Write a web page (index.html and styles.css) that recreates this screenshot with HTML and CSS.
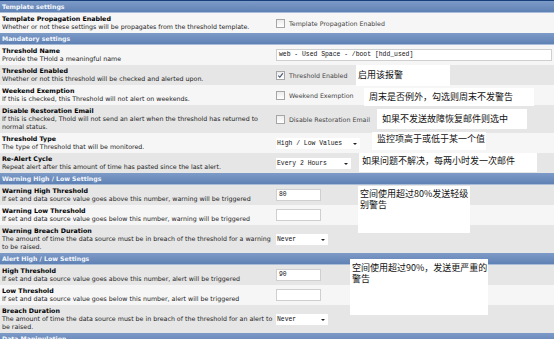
FILE: index.html
```html
<!DOCTYPE html>
<html lang="en">
<head>
    <meta charset="UTF-8">
    <title>Threshold Template</title>
    <link rel="stylesheet" href="styles.css">
</head>
<body>
    <div class="page">
        <div class="hdr">Template settings</div>
        <div class="row light">
            <div class="desc"><b>Template Propagation Enabled</b>Whether or not these settings will be propagates from the threshold template.</div>
            <div class="field"><span class="cb"></span><span class="lbl">Template Propagation Enabled</span></div>
        </div>

        <div class="hdr">Mandatory settings</div>
        <div class="row light">
            <div class="desc"><b>Threshold Name</b>Provide the THold a meaningful name</div>
            <div class="field"><span class="text wide">web - Used Space - /boot [hdd_used]</span></div>
        </div>
        <div class="row gray">
            <div class="desc"><b>Threshold Enabled</b>Whether or not this threshold will be checked and alerted upon.</div>
            <div class="field"><span class="cb checked"><svg viewBox="0 0 8 8" width="7" height="7"><path d="M1.5 4.2 L3.2 6 L6.6 1.6" fill="none" stroke="#3a4a6a" stroke-width="1.2"/></svg></span><span class="lbl">Threshold Enabled</span></div>
        </div>
        <div class="row light">
            <div class="desc"><b>Weekend Exemption</b>If this is checked, this Threshold will not alert on weekends.</div>
            <div class="field"><span class="cb"></span><span class="lbl">Weekend Exemption</span></div>
        </div>
        <div class="row gray">
            <div class="desc"><b>Disable Restoration Email</b>If this is checked, Thold will not send an alert when the threshold has returned to normal status.</div>
            <div class="field"><span class="cb"></span><span class="lbl">Disable Restoration Email</span></div>
        </div>
        <div class="row light">
            <div class="desc"><b>Threshold Type</b>The type of Threshold that will be monitored.</div>
            <div class="field"><span class="select s-type">High / Low Values<i class="arrow"></i></span></div>
        </div>
        <div class="row gray">
            <div class="desc"><b>Re-Alert Cycle</b>Repeat alert after this amount of time has pasted since the last alert.</div>
            <div class="field"><span class="select s-cycle">Every 2 Hours<i class="arrow"></i></span></div>
        </div>

        <div class="hdr">Warning High / Low Settings</div>
        <div class="row gray">
            <div class="desc"><b>Warning High Threshold</b>If set and data source value goes above this number, warning will be triggered</div>
            <div class="field"><span class="text short">80</span></div>
        </div>
        <div class="row light">
            <div class="desc"><b>Warning Low Threshold</b>If set and data source value goes below this number, warning will be triggered</div>
            <div class="field"><span class="text short"></span></div>
        </div>
        <div class="row gray">
            <div class="desc"><b>Warning Breach Duration</b>The amount of time the data source must be in breach of the threshold for a warning to be raised.</div>
            <div class="field"><span class="select s-never">Never<i class="arrow"></i></span></div>
        </div>

        <div class="hdr">Alert High / Low Settings</div>
        <div class="row gray">
            <div class="desc"><b>High Threshold</b>If set and data source value goes above this number, alert will be triggered</div>
            <div class="field"><span class="text short">90</span></div>
        </div>
        <div class="row light">
            <div class="desc"><b>Low Threshold</b>If set and data source value goes below this number, alert will be triggered</div>
            <div class="field"><span class="text short"></span></div>
        </div>
        <div class="row gray">
            <div class="desc"><b>Breach Duration</b>The amount of time the data source must be in breach of the threshold for an alert to be raised.</div>
            <div class="field"><span class="select s-never">Never<i class="arrow"></i></span></div>
        </div>

        <div class="hdr">Data Manipulation</div>

        <!-- pasted annotations -->
        <div class="note n1">启用该报警</div>
        <div class="note n2">周末是否例外，勾选则周末不发警告</div>
        <div class="note n3">如果不发送故障恢复邮件则选中</div>
        <div class="note n4">监控项高于或低于某一个值</div>
        <div class="note n5">如果问题不解决，每两小时发一次邮件</div>
        <div class="note n6">空间使用超过80%发送轻级<br>别警告</div>
        <div class="note n7">空间使用超过90%，发送更严重的<br>警告</div>
    </div>
</body>
</html>
```

FILE: styles.css
```css
body {
    margin: 0;
    background: #fff;
    font-family: "DejaVu Sans", Verdana, sans-serif;
}
.page {
    position: relative;
    width: 554px;
    height: 339px;
    overflow: hidden;
    border-top: 1px solid #163f7c;
}
.hdr {
    height: 11px;
    line-height: 11px;
    padding-left: 2px;
    font-size: 6.2px;
    font-weight: bold;
    color: #f4f7fc;
    background: linear-gradient(#7e9bc8, #5f81b4);
    border-bottom: 1px solid #a9bcd8;
}
.row {
    display: grid;
    grid-template-columns: 275px 1fr;
}
.light {
    background: #f6f6f6;
}
.gray {
    background: #e6e6e6;
}
.desc {
    padding: 2px;
    font-size: 6.3px;
    line-height: 8px;
    color: #222;
}
.desc b {
    display: block;
    color: #000;
}
.field {
    display: flex;
    align-items: center;
    padding-left: 1px;
}
.cb {
    width: 7px;
    height: 7px;
    border: 1px solid #a6a6a6;
    background: linear-gradient(#ececec, #fff);
    display: flex;
    align-items: center;
    justify-content: center;
}
.lbl {
    margin-left: 4px;
    font-size: 6.3px;
    color: #444;
}
.text {
    height: 10px;
    line-height: 10px;
    padding-left: 2px;
    background: #fff;
    border: 1px solid #cfcfcf;
    font-family: "Liberation Mono", monospace;
    font-size: 6.4px;
    color: #111;
}
.wide {
    width: 272px;
}
.short {
    width: 41px;
}
.select {
    position: relative;
    height: 11px;
    line-height: 11px;
    padding-left: 1px;
    background: #fff;
    font-family: "Liberation Mono", monospace;
    font-size: 6.4px;
    color: #111;
}
.s-type {
    width: 83px;
}
.s-cycle {
    width: 74px;
}
.s-never {
    width: 51px;
}
.arrow {
    position: absolute;
    right: 3px;
    top: 5px;
    border-left: 2px solid transparent;
    border-right: 2px solid transparent;
    border-top: 2px solid #222;
}
.note {
    position: absolute;
    background: #fff;
    font-family: "Noto Sans CJK SC", sans-serif;
    font-size: 9px;
    line-height: 10.5px;
    color: #111;
    padding-left: 2px;
    box-sizing: border-box;
}
.n1 { left: 356px; top: 64px; width: 94px; height: 21px; padding-top: 5px; }
.n2 { left: 364px; top: 87px; width: 170px; height: 18px; padding-top: 4px; padding-left: 5px; }
.n3 { left: 377px; top: 108px; width: 150px; height: 20px; padding-top: 5px; padding-left: 5px; }
.n4 { left: 372px; top: 131px; width: 114px; height: 18px; padding-top: 2px; padding-left: 5px; }
.n5 { left: 359px; top: 152px; width: 178px; height: 19px; padding-top: 3px; padding-left: 3px; }
.n6 { left: 358px; top: 185px; width: 112px; height: 47px; padding-top: 3px; }
.n7 { left: 350px; top: 258px; width: 138px; height: 56px; padding-top: 4px; }
```
